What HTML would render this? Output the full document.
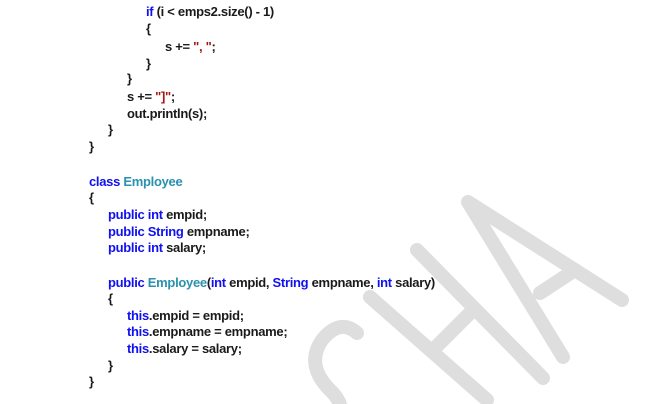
<!DOCTYPE html>
<html><head><style>
body{margin:0;width:660px;height:404px;background:#fff;position:relative;overflow:hidden;font-family:"Liberation Sans",sans-serif;}
svg{position:absolute;left:0;top:0}
.l{position:absolute;font-size:13px;font-weight:bold;line-height:16px;color:#1a1a1a;white-space:pre;letter-spacing:-0.3px}
.k{color:#1010f0}.t{color:#2b91af}.s{color:#a31515}
</style></head><body>
<svg width="660" height="404"><g stroke="#dedede" stroke-width="14" stroke-linecap="round" fill="none">
<path d="M468 202 L563 357 M468 202 L622 300 M540 293 L575 270"/>
<path d="M417 250 L543 378 M370 297 L487 400 M433 350 L470 313"/>
<path d="M357 333 Q340 318 322 340 Q305 365 330 390 Q345 404 340 420"/>
</g></svg>
<div class="l" style="left:146px;top:4px"><span class="k">if</span> (i &lt; emps2.size() - 1)</div>
<div class="l" style="left:146px;top:21px">{</div>
<div class="l" style="left:165px;top:39px">s += <span class="s">", "</span>;</div>
<div class="l" style="left:146px;top:56px">}</div>
<div class="l" style="left:127px;top:71px">}</div>
<div class="l" style="left:127px;top:89px">s += <span class="s">"]"</span>;</div>
<div class="l" style="left:127px;top:106px">out.println(s);</div>
<div class="l" style="left:108px;top:122px">}</div>
<div class="l" style="left:89px;top:139px">}</div>
<div class="l" style="left:89px;top:174px"><span class="k">class</span> <span class="t">Employee</span></div>
<div class="l" style="left:89px;top:190px">{</div>
<div class="l" style="left:108px;top:207px"><span class="k">public int</span> empid;</div>
<div class="l" style="left:108px;top:224px"><span class="k">public String</span> empname;</div>
<div class="l" style="left:108px;top:240px"><span class="k">public int</span> salary;</div>
<div class="l" style="left:108px;top:275px"><span class="k">public</span> <span class="t">Employee</span>(<span class="k">int</span> empid, <span class="k">String</span> empname, <span class="k">int</span> salary)</div>
<div class="l" style="left:108px;top:291px">{</div>
<div class="l" style="left:127px;top:308px"><span class="k">this</span>.empid = empid;</div>
<div class="l" style="left:127px;top:324px"><span class="k">this</span>.empname = empname;</div>
<div class="l" style="left:127px;top:341px"><span class="k">this</span>.salary = salary;</div>
<div class="l" style="left:108px;top:358px">}</div>
<div class="l" style="left:89px;top:374px">}</div>
</body></html>
